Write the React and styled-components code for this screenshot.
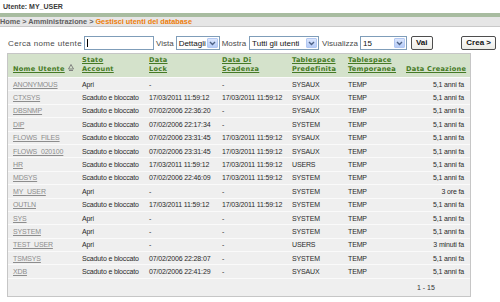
import React from "react";
import styled, { createGlobalStyle } from "styled-components";

const Global = createGlobalStyle`
  html, body { margin: 0; padding: 0; background: #fff; }
  body { font-family: "Liberation Sans", Arial, sans-serif; color: #333; }
`;

const Page = styled.div`
  width: 500px;
  height: 302px;
  overflow: hidden;
  background: #fff;
`;

const UserLine = styled.div`
  height: 13px;
  line-height: 13px;
  padding-left: 3px;
  font-size: 7px;
  font-weight: bold;
  color: #3a3a3a;
`;

const GreenBar = styled.div`
  height: 4px;
  background: #a8bca0;
`;

const Crumbs = styled.div`
  height: 9px;
  line-height: 9px;
  background: #e6e6e6;
  border-bottom: 1px solid #c9c9c9;
  font-size: 7.3px;
  font-weight: bold;
  color: #606060;
  white-space: nowrap;
`;

const Current = styled.span`
  color: #ee7d0a;
`;

const Toolbar = styled.div`
  display: flex;
  align-items: center;
  height: 14px;
  margin-top: 9px;
  padding: 0 4px 0 8px;
  font-size: 8px;
  color: #4a4a4a;
`;

const Label = styled.span`
  letter-spacing: ${(p) => p.$ls || "0px"};
  margin-right: ${(p) => p.$mr || "2px"};
  white-space: nowrap;
`;

const TextInput = styled.div`
  width: 68px;
  height: 12px;
  border: 1px solid #7f9db9;
  background: #fff;
  margin-right: 2px;
  position: relative;
`;

const Caret = styled.span`
  position: absolute;
  left: 2px;
  top: 2px;
  width: 1px;
  height: 8px;
  background: #000;
`;

const SelectBox = styled.div`
  display: flex;
  align-items: center;
  width: ${(p) => p.$w}px;
  height: 12px;
  border: 1px solid #7f9db9;
  background: #fff;
  margin-right: ${(p) => p.$mr || "2px"};
  box-sizing: content-box;
`;

const SelectText = styled.span`
  flex: 1;
  padding-left: 2px;
  font-size: 8px;
  color: #111;
  white-space: nowrap;
  overflow: hidden;
`;

const ArrowBox = styled.span`
  width: 11px;
  height: 10px;
  margin: 1px;
  background: linear-gradient(#dbe6fd, #b5cbf7);
  border: 1px solid #b3c8f2;
  box-sizing: border-box;
  display: flex;
  align-items: center;
  justify-content: center;
  border-radius: 1px;
`;

const Button = styled.div`
  height: 12px;
  line-height: 12px;
  padding: 0 ${(p) => p.$px || "4px"};
  border: 1px solid #4d4d4d;
  border-radius: 2px;
  background: linear-gradient(#ffffff, #ecebe6);
  font-size: 8px;
  font-weight: bold;
  color: #111;
  margin-left: ${(p) => p.$ml || "0"};
  white-space: nowrap;
`;

const Table = styled.div`
  margin: 3px 0 0 7px;
  width: 462px;
  border: 1px solid #c6c6c6;
  background: #efefef;
`;

const cols = "69px 67px 73px 70px 56px 58px 69px";

const HeadRow = styled.div`
  display: grid;
  grid-template-columns: ${cols};
  height: 23px;
  background: #d4e2cb;
  align-items: end;
`;

const HeadCell = styled.div`
  padding: 0 0 3px 5px;
  font-family: "DejaVu Sans", Verdana, sans-serif;
  font-weight: bold;
  font-size: 6.6px;
  line-height: 9px;
  letter-spacing: 0.25px;
  color: #457a25;
  text-decoration: underline;
  text-align: ${(p) => (p.$right ? "right" : "left")};
  padding-right: ${(p) => (p.$right ? "6px" : "0")};
  white-space: nowrap;
`;

const Row = styled.div`
  display: grid;
  grid-template-columns: ${cols};
  height: 13.4px;
  align-items: center;
  border-top: 1px solid #fafafa;
  box-sizing: border-box;
  font-size: 7px;
  letter-spacing: -0.15px;
  color: #2a2a2a;
`;

const Cell = styled.div`
  padding-left: 5px;
  white-space: nowrap;
  text-align: ${(p) => (p.$right ? "right" : "left")};
  padding-right: ${(p) => (p.$right ? "6px" : "0")};
`;

const NameLink = styled.span`
  color: #8d8d8d;
  text-decoration: underline;
`;

const Footer = styled.div`
  height: 17px;
  border-top: 1px solid #fafafa;
  display: flex;
  align-items: center;
  padding-left: 409px;
  font-size: 7px;
  color: #333;
`;

const rows = [
  ["ANONYMOUS", "Apri", "-", "-", "SYSAUX", "TEMP", "5,1 anni fa"],
  ["CTXSYS", "Scaduto e bloccato", "17/03/2011 11:59:12", "17/03/2011 11:59:12", "SYSAUX", "TEMP", "5,1 anni fa"],
  ["DBSNMP", "Scaduto e bloccato", "07/02/2006 22:36:20", "-", "SYSAUX", "TEMP", "5,1 anni fa"],
  ["DIP", "Scaduto e bloccato", "07/02/2006 22:17:34", "-", "SYSTEM", "TEMP", "5,1 anni fa"],
  ["FLOWS_FILES", "Scaduto e bloccato", "07/02/2006 23:31:45", "17/03/2011 11:59:12", "SYSAUX", "TEMP", "5,1 anni fa"],
  ["FLOWS_020100", "Scaduto e bloccato", "07/02/2006 23:31:45", "17/03/2011 11:59:12", "SYSAUX", "TEMP", "5,1 anni fa"],
  ["HR", "Scaduto e bloccato", "17/03/2011 11:59:12", "17/03/2011 11:59:12", "USERS", "TEMP", "5,1 anni fa"],
  ["MDSYS", "Scaduto e bloccato", "07/02/2006 22:46:09", "17/03/2011 11:59:12", "SYSTEM", "TEMP", "5,1 anni fa"],
  ["MY_USER", "Apri", "-", "-", "SYSTEM", "TEMP", "3 ore fa"],
  ["OUTLN", "Scaduto e bloccato", "17/03/2011 11:59:12", "17/03/2011 11:59:12", "SYSTEM", "TEMP", "5,1 anni fa"],
  ["SYS", "Apri", "-", "-", "SYSTEM", "TEMP", "5,1 anni fa"],
  ["SYSTEM", "Apri", "-", "-", "SYSTEM", "TEMP", "5,1 anni fa"],
  ["TEST_USER", "Apri", "-", "-", "USERS", "TEMP", "3 minuti fa"],
  ["TSMSYS", "Scaduto e bloccato", "07/02/2006 22:28:07", "-", "SYSTEM", "TEMP", "5,1 anni fa"],
  ["XDB", "Scaduto e bloccato", "07/02/2006 22:41:29", "-", "SYSAUX", "TEMP", "5,1 anni fa"],
];

const Chevron = () => (
  <svg width="7" height="5" viewBox="0 0 7 5">
    <path d="M1 1 L3.5 3.5 L6 1" fill="none" stroke="#4d6185" strokeWidth="1.4" />
  </svg>
);

const SortArrow = () => (
  <svg width="6" height="7" viewBox="0 0 6 7" style={{ marginLeft: 3 }}>
    <path d="M3 0.5 L5.5 5 H0.5 Z" fill="none" stroke="#777" strokeWidth="0.9" />
    <path d="M1 6.5 H5" stroke="#777" strokeWidth="0.9" />
  </svg>
);

const Select = ({ w, text, mr }) => (
  <SelectBox $w={w} $mr={mr}>
    <SelectText>{text}</SelectText>
    <ArrowBox>
      <Chevron />
    </ArrowBox>
  </SelectBox>
);

export default function App() {
  return (
    <Page>
      <Global />
      <UserLine>Utente: MY_USER</UserLine>
      <GreenBar />
      <Crumbs>
        Home &gt; Amministrazione &gt; <Current>Gestisci utenti del database</Current>
      </Crumbs>
      <Toolbar>
        <Label $ls="0.35px">Cerca nome utente</Label>
        <TextInput>
          <Caret />
        </TextInput>
        <Label>Vista</Label>
        <Select w={42} text="Dettagli" />
        <Label $mr="3px">Mostra</Label>
        <Select w={68} text="Tutti gli utenti" mr="3px" />
        <Label>Visualizza</Label>
        <Select w={45} text="15" mr="4px" />
        <Button $px="4px">Vai</Button>
        <Button $ml="auto" $px="4px">Crea &gt;</Button>
      </Toolbar>
      <Table>
        <HeadRow>
          <HeadCell>
            Nome Utente
            <SortArrow />
          </HeadCell>
          <HeadCell>Stato<br />Account</HeadCell>
          <HeadCell>Data<br />Lock</HeadCell>
          <HeadCell>Data Di<br />Scadenza</HeadCell>
          <HeadCell>Tablespace<br />Predefinita</HeadCell>
          <HeadCell>Tablespace<br />Temporanea</HeadCell>
          <HeadCell $right>Data Creazione</HeadCell>
        </HeadRow>
        {rows.map((r) => (
          <Row key={r[0]}>
            <Cell>
              <NameLink>{r[0]}</NameLink>
            </Cell>
            <Cell>{r[1]}</Cell>
            <Cell>{r[2]}</Cell>
            <Cell>{r[3]}</Cell>
            <Cell>{r[4]}</Cell>
            <Cell>{r[5]}</Cell>
            <Cell $right>{r[6]}</Cell>
          </Row>
        ))}
        <Footer>1 - 15</Footer>
      </Table>
    </Page>
  );
}
